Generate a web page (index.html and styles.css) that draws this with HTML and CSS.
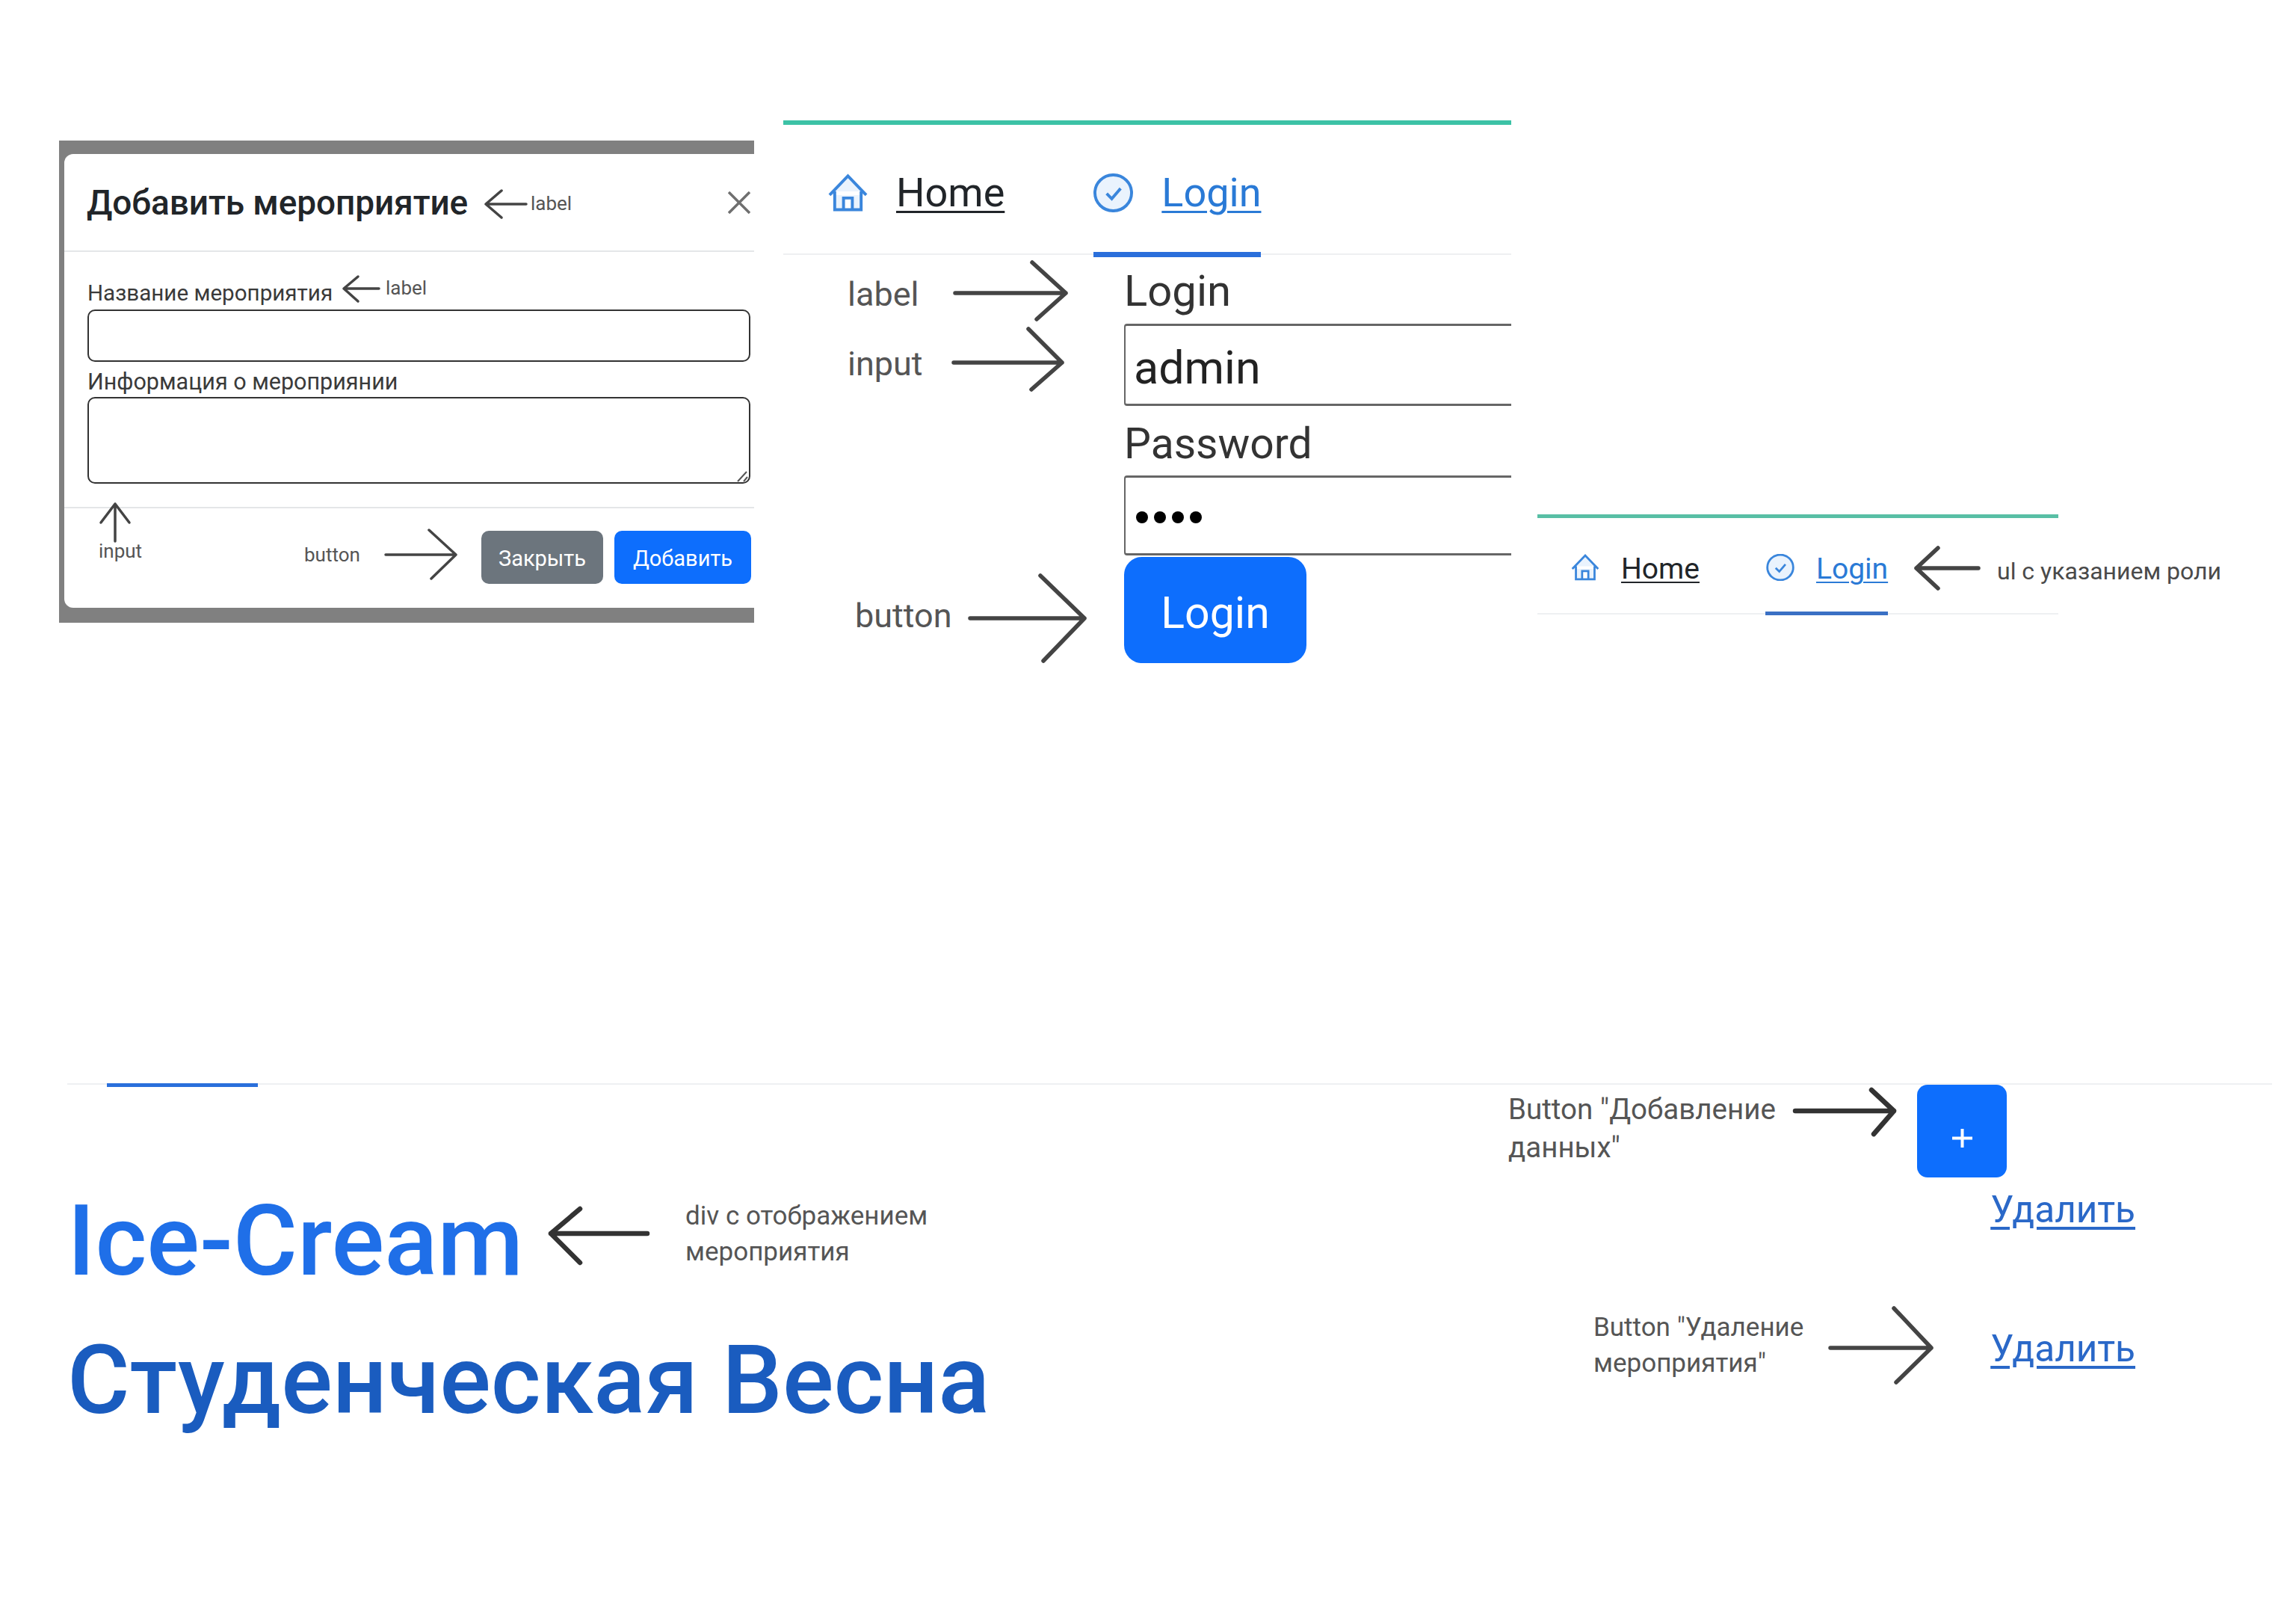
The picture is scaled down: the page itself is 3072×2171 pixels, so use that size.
FILE: index.html
```html
<!DOCTYPE html>
<html lang="ru">
<head>
<meta charset="utf-8">
<title>Макет интерфейса</title>
<link rel="stylesheet" href="styles.css">
</head>
<body>
<main class="canvas">

  <section class="modal">
    <div class="dialog">
      <header class="dialog-head">
        <h2 class="dialog-title">Добавить мероприятие</h2>
        <svg class="close-icon" viewBox="0 0 30 30"><path d="M1 1 29 29M29 1 1 29"/></svg>
      </header>
      <div class="dialog-body">
        <label class="dialog-label">Название мероприятия</label>
        <div class="dialog-input"></div>
        <label class="dialog-label dialog-label-second">Информация о мероприянии</label>
        <div class="dialog-input dialog-textarea">
          <svg class="resize-grip" viewBox="0 0 16 16"><path d="M1 15 13 2M9 15 14 9"/></svg>
        </div>
      </div>
      <footer class="dialog-foot">
        <button class="btn btn-grey">Закрыть</button>
        <button class="btn btn-blue">Добавить</button>
      </footer>
    </div>
  </section>

  <section class="login-shot">
    <nav class="nav">
      <a class="nav-item">
        <svg class="nav-icon" viewBox="0 0 54 52"><path d="M2 29 27 3l25 26M9 24v25h36V24M21 49V33h12v16"/></svg>
        <span class="nav-text nav-home">Home</span>
      </a>
      <a class="nav-item nav-item-active">
        <svg class="nav-icon" viewBox="0 0 54 52"><ellipse cx="27" cy="26" rx="25" ry="24.5"/><path d="m18 27 7 7 12-14"/></svg>
        <span class="nav-text nav-login">Login</span>
      </a>
    </nav>
    <form class="login-form">
      <label class="login-label">Login</label>
      <div class="login-field">admin</div>
      <label class="login-label login-label-second">Password</label>
      <div class="login-field login-field-pass"><i class="dot"></i><i class="dot"></i><i class="dot"></i><i class="dot"></i></div>
      <button type="button" class="login-btn">Login</button>
    </form>
  </section>

  <section class="role-shot">
    <nav class="nav nav-small">
      <a class="nav-item">
        <svg class="nav-icon" viewBox="0 0 54 52"><path d="M2 29 27 3l25 26M9 24v25h36V24M21 49V33h12v16"/></svg>
        <span class="nav-text nav-home">Home</span>
      </a>
      <a class="nav-item nav-item-active">
        <svg class="nav-icon" viewBox="0 0 54 52"><ellipse cx="27" cy="26" rx="25" ry="24.5"/><path d="m18 27 7 7 12-14"/></svg>
        <span class="nav-text nav-login">Login</span>
      </a>
    </nav>
  </section>

  <section class="events">
    <div class="events-tab"></div>
    <div class="events-add-row"><button class="add-btn"><svg viewBox="0 0 27 25"><path d="M13.5 0v25M0 12.5h27"/></svg></button></div>
    <div class="event event-first">
      <h1 class="event-title title-ice">Ice-Cream</h1>
      <a class="delete-link">Удалить</a>
    </div>
    <div class="event event-second">
      <h1 class="event-title title-spring">Студенческая Весна</h1>
      <a class="delete-link">Удалить</a>
    </div>
  </section>

  <svg class="arrows" viewBox="0 0 3072 2171">
    <g class="arrow-thin">
      <path d="M704 273H650M671 255 650 273 671 291"/>
      <path d="M507 386H460M479 370 460 386 479 403"/>
      <path d="M154 724V674M135 699 154 674 173 699"/>
      <path d="M516 742H610M574 709 610 742 577 774"/>
    </g>
    <g class="arrow-mid">
      <path d="M1278 392H1426M1381 351 1426 392 1387 427"/>
      <path d="M1276 485H1421M1376 440 1421 485 1380 521"/>
      <path d="M1298 827H1451M1392 770 1451 827 1396 884"/>
      <path d="M2647 760H2564M2593 733 2564 760 2593 787"/>
      <path d="M2449 1803H2584M2534 1750 2584 1803 2537 1849"/>
    </g>
    <g class="arrow-thick">
      <path d="M866 1650H737M776 1617 737 1650 776 1689"/>
      <path d="M2402 1486H2534M2504 1458 2534 1486 2507 1517"/>
    </g>
  </svg>

  <span class="note note-a">label</span>
  <span class="note note-b">label</span>
  <span class="note note-c">input</span>
  <span class="note note-d">button</span>
  <span class="note note-big note-e">label</span>
  <span class="note note-big note-f">input</span>
  <span class="note note-big note-g">button</span>
  <span class="note note-h">ul с указанием роли</span>
  <span class="note note-wide note-i">div с отображением<br>мероприятия</span>
  <span class="note note-wide note-j">Button "Добавление<br>данных"</span>
  <span class="note note-wide note-k">Button "Удаление<br>мероприятия"</span>
</main>
</body>
</html>
```
FILE: styles.css
```css
* { box-sizing: border-box; }
html, body { margin: 0; padding: 0; background: #fff; }
body { font-family: Roboto, "Noto Sans", "Liberation Sans", sans-serif; color: #212529; }
h1, h2 { margin: 0; }
a { display: inline-block; }
.canvas { position: relative; width: 3072px; height: 2171px; overflow: hidden; background: #fff; }

/* modal screenshot */
.modal { position: absolute; left: 79px; top: 188px; width: 930px; height: 645px; padding: 18px 0 20px 7px; background: #808080; }
.dialog { display: flex; flex-direction: column; height: 100%; background: #fff; border-radius: 12px 0 0 12px; }
.dialog-head { display: flex; align-items: center; justify-content: space-between; height: 131px; padding: 2px 5px 0 30px; border-bottom: 2px solid #e4e6e8; }
.dialog-title { font-size: 46px; font-weight: 500; line-height: 1.2; color: #212529; letter-spacing: -.1px; }
.close-icon { width: 30px; height: 30px; margin-top: -2px; fill: none; stroke: #6f6f6f; stroke-width: 3.5; }
.dialog-body { display: flex; flex-direction: column; height: 343px; padding: 40px 5px 0 31px; border-bottom: 2px solid #e4e6e8; }
.dialog-label { font-size: 29.6px; line-height: 31px; height: 37px; color: #3a3a3a; }
.dialog-label-second { height: 47px; line-height: 53px; font-size: 30.5px; }
.dialog-input { position: relative; height: 70px; flex: none; border: 2px solid #333; border-radius: 10px; background: #fff; }
.dialog-textarea { height: 116px; }
.resize-grip { position: absolute; right: 0; bottom: 0; width: 16px; height: 16px; fill: none; stroke: #555; stroke-width: 2; }
.dialog-foot { display: flex; justify-content: flex-end; gap: 15px; padding: 30px 4px 0 0; }
.btn { height: 71px; border: 0; border-radius: 10px; color: #fff; font: 400 29px Roboto, sans-serif; padding: 2px 0 0; }
.btn-grey { width: 163px; background: #6c757d; }
.btn-blue { width: 183px; background: #0d6efd; }

/* nav */
.login-shot { position: absolute; left: 1048px; top: 161px; width: 974px; height: 730px; overflow: hidden; border-top: 6px solid #3cc2a6; }
.role-shot { position: absolute; left: 2057px; top: 688px; width: 697px; height: 136px; border-top: 5px solid #58bfa5; }
.nav { display: flex; height: 174px; padding-left: 60px; gap: 119px; border-bottom: 2px solid #eef0f2; }
.nav-item { display: flex; flex: none; height: 177px; gap: 38px; align-items: flex-start; padding-top: 65px; color: #212529; }
.nav-item-active { border-bottom: 7px solid #2a6fdb; }
.nav-icon { flex: none; width: 53px; height: 52px; fill: #eaf3fd; stroke: #3a86dc; stroke-width: 4; }
.nav-text { font-size: 54px; line-height: 52px; text-decoration: underline; text-decoration-thickness: 3px; text-underline-offset: 6px; }
.nav-home { color: #212529; }
.nav-login { color: #2a7ad6; }
.nav-small { height: 129px; padding-left: 44px; gap: 88px; }
.nav-small .nav-item { height: 130px; gap: 28px; padding-top: 48px; }
.nav-small .nav-item-active { border-bottom: 5px solid #3a70c4; }
.nav-small .nav-icon { width: 40px; height: 36px; }
.nav-small .nav-text { font-size: 39px; line-height: 36px; margin-top: 2px; text-decoration-thickness: 2px; text-underline-offset: 4px; }

/* login form */
.login-form { display: flex; flex-direction: column; align-items: flex-start; padding-left: 456px; }
.login-label { font-size: 58px; line-height: 88px; height: 88px; color: #333; margin-top: 4px; }
.login-label-second { height: 93px; margin-top: 0; font-size: 57px; line-height: 101px; }
.login-field { width: 530px; height: 110px; flex: none; border: 3px solid #666; border-left-width: 2px; border-radius: 4px 0 0 4px; padding: 6px 0 0 11px; font-size: 61px; line-height: 100px; color: #222; }
.login-field-pass { height: 107px; display: flex; align-items: center; gap: 8px; padding: 5px 0 0 14px; }
.dot { width: 16px; height: 16px; background: #000; border-radius: 50%; }
.login-btn { width: 244px; height: 142px; margin-top: 2px; border: 0; border-radius: 24px; background: #0d6efd; color: #fff; font: 400 59px Roboto, sans-serif; padding: 6px 0 0; }

/* events */
.events { position: absolute; left: 90px; top: 1449px; width: 2950px; border-top: 2px solid #eef0f2; }
.events-tab { position: absolute; left: 53px; top: -2px; width: 202px; height: 5px; background: #2a6fdb; }
.events-add-row { display: flex; justify-content: flex-end; padding-right: 355px; }
.add-btn { width: 120px; height: 124px; border: 0; border-radius: 14px; background: #0d6efd; padding: 18px 0 0; display: flex; align-items: center; justify-content: center; }
.add-btn svg { width: 27px; height: 25px; fill: none; stroke: #fff; stroke-width: 4; }
.event { display: flex; justify-content: space-between; align-items: flex-start; padding: 0 183px 0 0; }
.event-first { margin-top: 5px; height: 186px; }
.event-second { height: 180px; }
.event-title { font-size: 132px; line-height: 160px; font-weight: 500; }
.title-ice { color: #1f6fe8; }
.title-spring { color: #1a5cbf; font-size: 128px; }
.delete-link { font-size: 49.5px; line-height: 60px; margin-top: 8px; color: #2a68c8; text-decoration: underline; text-decoration-thickness: 4px; text-underline-offset: 6px; }

/* annotations */
.arrows { position: absolute; left: 0; top: 0; width: 3072px; height: 2171px; fill: none; pointer-events: none; stroke-linecap: round; stroke-linejoin: round; }
.arrow-thin { stroke: #444; stroke-width: 3.5; }
.arrow-mid { stroke: #444; stroke-width: 5.5; }
.arrow-thick { stroke: #333; stroke-width: 6.5; }
.note { position: absolute; white-space: nowrap; color: #555; font-size: 26px; line-height: 32px; }
.note-a { left: 710px; top: 256px; }
.note-b { left: 516px; top: 369px; }
.note-c { left: 132px; top: 721px; }
.note-d { left: 407px; top: 726px; }
.note-big { font-size: 45px; line-height: 50px; color: #555; }
.note-e { left: 1134px; top: 369px; }
.note-f { left: 1134px; top: 462px; }
.note-g { left: 1144px; top: 799px; }
.note-h { left: 2672px; top: 746px; font-size: 32px; line-height: 36px; color: #4a4a4a; }
.note-wide { font-size: 35px; line-height: 48px; }
.note-i { left: 917px; top: 1603px; }
.note-j { left: 2018px; top: 1458px; font-size: 38.5px; line-height: 51px; }
.note-k { left: 2132px; top: 1752px; }
```
